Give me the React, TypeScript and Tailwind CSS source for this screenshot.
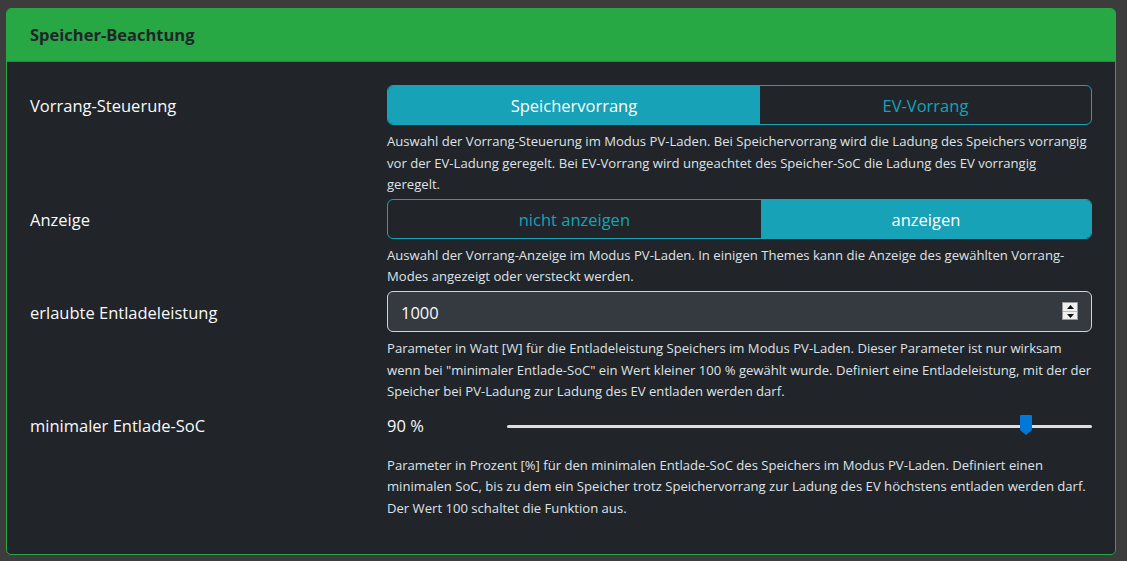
import { ReactNode } from 'react';

const font = { fontFamily: '"Open Sans", "Noto Sans", sans-serif' };

const Help = ({ children }: { children: ReactNode }) => (
  <p className="mt-[6px] text-[13.1px] leading-[21.6px] text-[#dee2e6]">{children}</p>
);

const Row = ({
  label,
  height,
  children,
  className = '',
}: {
  label: string;
  height: string;
  children: ReactNode;
  className?: string;
}) => (
  <div className={`grid grid-cols-[345px_1fr] gap-x-3 ${className}`}>
    <div className={`flex items-center text-[16.5px] text-[#f8f9fa] ${height}`}>{label}</div>
    <div>{children}</div>
  </div>
);

const Toggle = ({ options, active }: { options: string[]; active: number }) => (
  <div className="flex h-[40px] w-full overflow-hidden rounded-[6px] border border-[#17a2b8]">
    {options.map((opt, i) => (
      <button
        key={opt}
        className={`flex-auto px-4 pt-[3px] text-[16.5px] ${
          i === active ? 'bg-[#17a2b8] text-white' : 'bg-transparent text-[#17a2b8]'
        }`}
      >
        {opt}
      </button>
    ))}
  </div>
);

const Spinner = () => (
  <div className="flex h-[18px] w-[16px] flex-col border border-[#9a9a9a] bg-[#efefef]">
    <div className="flex flex-1 items-center justify-center border-b border-[#b8b8b8]">
      <svg width="7" height="4" viewBox="0 0 7 4">
        <path d="M3.5 0 L7 4 L0 4 Z" fill="#111" />
      </svg>
    </div>
    <div className="flex flex-1 items-center justify-center">
      <svg width="7" height="4" viewBox="0 0 7 4">
        <path d="M0 0 L7 0 L3.5 4 Z" fill="#111" />
      </svg>
    </div>
  </div>
);

const Slider = ({ value }: { value: number }) => (
  <div className="flex h-[44px] items-center pb-[3px] text-[16.5px] text-[#f8f9fa]">
    <span className="w-[120px] pt-[1px]">{value} %</span>
    <div className="relative h-[3px] flex-1 rounded-full bg-[#dedede]">
      <svg
        className="absolute top-[-10px]"
        style={{ left: `calc(${value}% - ${value * 0.12 + 3}px)` }}
        width="12"
        height="20"
        viewBox="0 0 12 20"
      >
        <path d="M1 0 H11 Q12 0 12 1 V15 L6 20 L0 15 V1 Q0 0 1 0 Z" fill="#0078d7" />
      </svg>
    </div>
  </div>
);

export default function App() {
  return (
    <div className="min-h-screen bg-[#3c3c3c] pl-[6px] pr-[11px] pt-[8px] pb-[7px]" style={font}>
      <div className="overflow-hidden rounded-[5px] border border-[#28a745] bg-[#212529]">
        <div className="flex h-[53px] items-center border-b border-[#1f8f3a] bg-[#28a745] px-[23px]">
          <h2 className="pt-[1px] text-[16.5px] font-bold text-[#212529]">Speicher-Beachtung</h2>
        </div>

        <div className="px-[23px] pt-[23px] pb-[34px]">
          <Row label="Vorrang-Steuerung" height="h-[40px] pt-[3px]">
            <Toggle options={['Speichervorrang', 'EV-Vorrang']} active={0} />
            <Help>
              Auswahl der Vorrang-Steuerung im Modus PV-Laden. Bei Speichervorrang wird die Ladung des Speichers
              vorrangig vor der EV-Ladung geregelt. Bei EV-Vorrang wird ungeachtet des Speicher-SoC die Ladung des EV
              vorrangig geregelt.
            </Help>
          </Row>

          <Row label="Anzeige" height="h-[40px] pt-[3px]" className="mt-[3px]">
            <Toggle options={['nicht anzeigen', 'anzeigen']} active={1} />
            <Help>
              Auswahl der Vorrang-Anzeige im Modus PV-Laden. In einigen Themes kann die Anzeige des gewählten
              Vorrang-Modes angezeigt oder versteckt werden.
            </Help>
          </Row>

          <Row label="erlaubte Entladeleistung" height="h-[41px] pt-[3px]" className="mt-[3px]">
            <div className="flex h-[41px] items-center justify-between rounded-[6px] border border-[#ced4da] bg-[#343a40] pl-[13px] pr-[13px] text-[16.5px] text-[#f8f9fa]">
              <span className="pt-[3px]">1000</span>
              <Spinner />
            </div>
            <Help>
              Parameter in Watt [W] für die Entladeleistung Speichers im Modus PV-Laden. Dieser Parameter ist nur
              wirksam wenn bei "minimaler Entlade-SoC" ein Wert kleiner 100 % gewählt wurde. Definiert eine
              Entladeleistung, mit der der Speicher bei PV-Ladung zur Ladung des EV entladen werden darf.
            </Help>
          </Row>

          <Row label="minimaler Entlade-SoC" height="h-[44px] pb-[2px]" className="mt-[3px]">
            <Slider value={90} />
            <div className="-mt-[1px]">
              <Help>
                Parameter in Prozent [%] für den minimalen Entlade-SoC des Speichers im Modus PV-Laden. Definiert einen
                minimalen SoC, bis zu dem ein Speicher trotz Speichervorrang zur Ladung des EV höchstens entladen
                werden darf. Der Wert 100 schaltet die Funktion aus.
              </Help>
            </div>
          </Row>
        </div>
      </div>
    </div>
  );
}
